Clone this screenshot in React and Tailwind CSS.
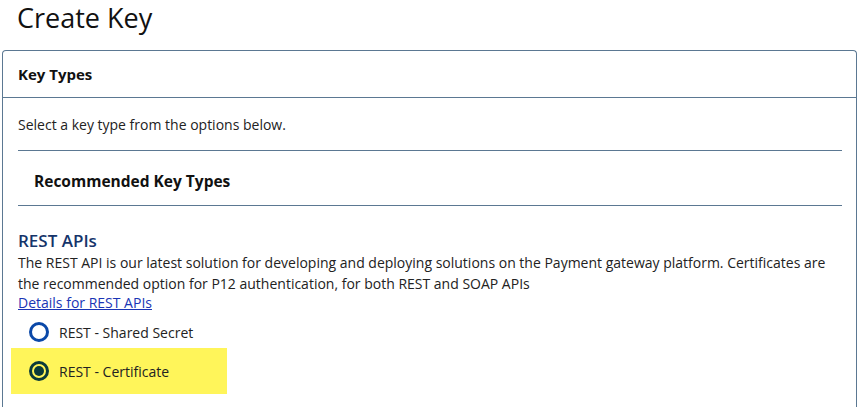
import React from 'react';

const RadioOption = ({ label, checked }) => (
  <label className="flex items-center gap-[10px] h-full px-[18px]">
    {checked ? (
      <span className="w-[20px] h-[20px] rounded-full border-[3px] border-[#0b3b3a] flex items-center justify-center">
        <span className="w-[10px] h-[10px] rounded-full bg-[#0b3b3a]" />
      </span>
    ) : (
      <span className="w-[20px] h-[20px] rounded-full border-[3px] border-[#0a48a8] bg-white" />
    )}
    <span className="text-[14px] text-[#222]">{label}</span>
  </label>
);

const App = () => {
  return (
    <div className="bg-white min-h-[407px] overflow-hidden" style={{ fontFamily: '"Open Sans", "Noto Sans", sans-serif' }}>
      <h1 className="text-[27px] leading-[36px] text-[#111] pl-[17px] pt-0 pb-[14px]">Create Key</h1>

      <div className="ml-[2px] w-[855px] border border-[#5b7892] rounded-t-[4px] border-b-0">
        <div className="h-[47px] flex items-center px-[15px] border-b border-[#5b7892]">
          <span className="text-[15px] font-bold text-[#111]">Key Types</span>
        </div>

        <div className="pl-[15px] pr-[14px] pt-[17px]">
          <p className="text-[14px] leading-[20px] text-[#222]">Select a key type from the options below.</p>

          <div className="mt-[15px] border-t border-b border-[#5b7892] h-[56px] flex items-center px-[16px] pt-[8px]">
            <span className="text-[15.5px] font-bold text-[#111]">Recommended Key Types</span>
          </div>

          <div className="pt-[24px]">
            <h2 className="text-[17px] leading-[22px] font-semibold text-[#15346a]">REST APIs</h2>
            <p className="text-[14px] leading-[21px] text-[#222] pr-[10px]">
              The REST API is our latest solution for developing and deploying solutions on the Payment gateway platform. Certificates are the recommended option for P12 authentication, for both REST and SOAP APIs
            </p>
            <a href="#" className="block w-fit text-[14px] leading-[17px] text-[#1a35b5] underline">Details for REST APIs</a>
          </div>
        </div>

        <div className="pt-[5px] pb-[20px]">
          <div className="ml-[8px] h-[32px]">
            <RadioOption label="REST - Shared Secret" checked={false} />
          </div>
          <div className="ml-[8px] w-[216px] bg-[#fff55a] h-[46px]">
            <RadioOption label="REST - Certificate" checked />
          </div>
        </div>
      </div>
    </div>
  );
};

export default App;
